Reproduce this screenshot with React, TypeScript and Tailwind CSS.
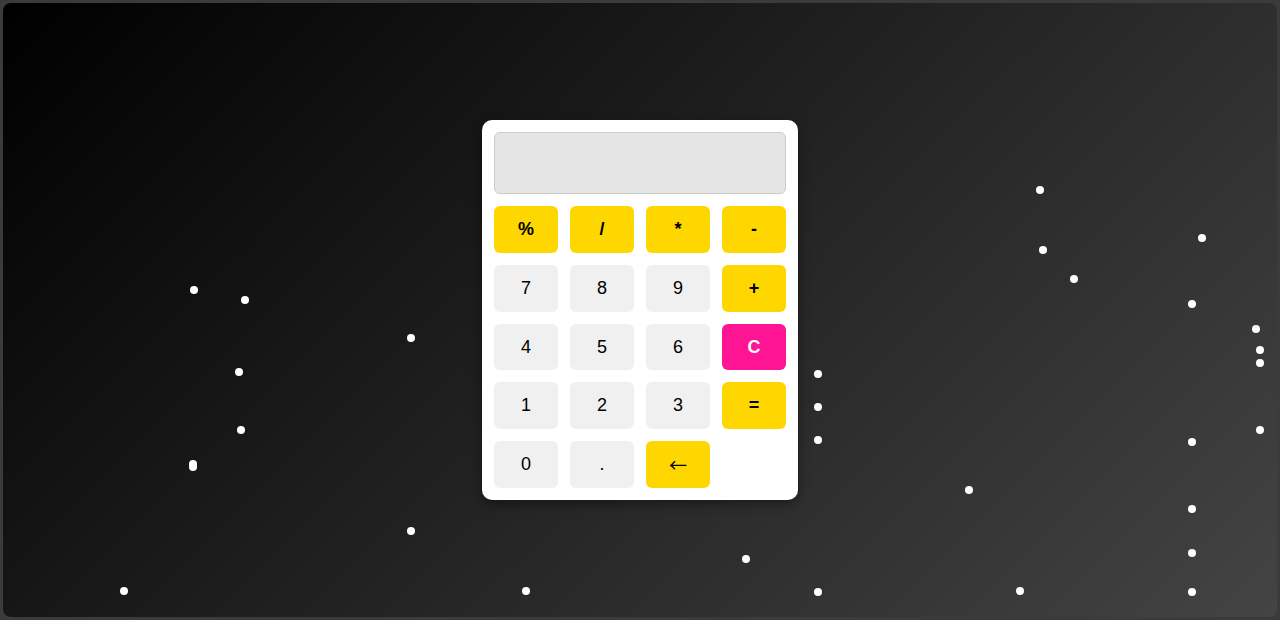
const dots: [number, number][] = [
  [194, 290], [245, 300], [411, 338], [239, 372], [241, 430], [193, 464], [193, 467],
  [411, 531], [124, 591], [526, 591], [746, 559], [818, 374], [818, 407], [818, 440],
  [818, 592], [969, 490], [1020, 591], [1040, 190], [1043, 250], [1074, 279],
  [1202, 238], [1192, 304], [1256, 329], [1260, 350], [1260, 363], [1192, 442],
  [1260, 430], [1192, 509], [1192, 553], [1192, 592],
];

type Key = { label: string; kind: "op" | "num" | "clear" | "back" | "empty" };

const keys: Key[] = [
  { label: "%", kind: "op" }, { label: "/", kind: "op" }, { label: "*", kind: "op" }, { label: "-", kind: "op" },
  { label: "7", kind: "num" }, { label: "8", kind: "num" }, { label: "9", kind: "num" }, { label: "+", kind: "op" },
  { label: "4", kind: "num" }, { label: "5", kind: "num" }, { label: "6", kind: "num" }, { label: "C", kind: "clear" },
  { label: "1", kind: "num" }, { label: "2", kind: "num" }, { label: "3", kind: "num" }, { label: "=", kind: "op" },
  { label: "0", kind: "num" }, { label: ".", kind: "num" }, { label: "←", kind: "back" }, { label: "", kind: "empty" },
];

const keyClass = (k: Key) => {
  if (k.kind === "op") return "bg-[#ffd700] font-bold text-black text-[18px]";
  if (k.kind === "clear") return "bg-[#ff1493] font-bold text-white text-[18px]";
  if (k.kind === "back") return "bg-[#ffd700] text-black text-[18px] font-['Noto_Sans_CJK_SC',sans-serif]";
  return "bg-[#f0f0f0] text-black text-[18px]";
};

const App = () => {
  return (
    <div
      className="relative h-[620px] w-full bg-[#3b3b3b] p-[3px]"
      style={{ fontFamily: '"Liberation Sans", Arial, sans-serif' }}
    >
      <div className="flex h-full items-center justify-center rounded-[8px] bg-[linear-gradient(135deg,#000000,#444444)]">
        <div className="w-[316px] rounded-[10px] bg-white p-3 shadow-[0_4px_12px_rgba(0,0,0,0.4)]">
          <div className="mb-3 h-[62px] rounded-[6px] border border-[#cccccc] bg-[#e5e5e5]" />
          <div className="grid grid-cols-4 gap-3">
            {keys.map((k, i) =>
              k.kind === "empty" ? (
                <div key={i} />
              ) : (
                <button
                  key={i}
                  className={`flex h-[46.75px] items-center justify-center rounded-[6px] ${keyClass(k)}`}
                >
                  {k.label}
                </button>
              )
            )}
          </div>
        </div>
      </div>
      {dots.map(([x, y], i) => (
        <span
          key={i}
          className="absolute h-2 w-2 rounded-full bg-white"
          style={{ left: x - 4, top: y - 4 }}
        />
      ))}
    </div>
  );
};

export default App;
